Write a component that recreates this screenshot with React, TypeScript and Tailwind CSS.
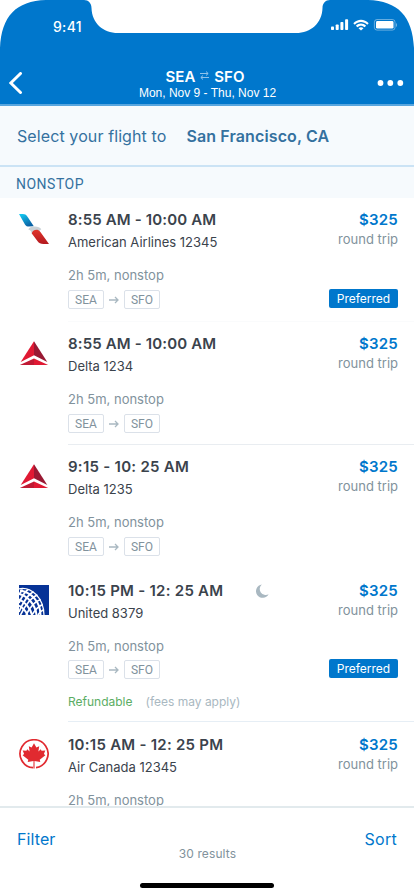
import type { ReactNode } from 'react'

type Airline = 'american' | 'delta' | 'united' | 'canada'

interface Flight {
  id: number
  airline: Airline
  time: string
  name: string
  route?: [string, string]
  preferred?: boolean
  overnight?: boolean
  refundable?: boolean
  height: string
  divider: string
  timeSpacing: string
}

const FLIGHTS: Flight[] = [
  { id: 1, airline: 'american', time: '8:55 AM - 10:00 AM', name: 'American Airlines 12345', route: ['SEA', 'SFO'], preferred: true, height: 'h-[124px]', divider: 'bg-[#fafbfc]', timeSpacing: 'tracking-[0.14px]' },
  { id: 2, airline: 'delta', time: '8:55 AM - 10:00 AM', name: 'Delta 1234', route: ['SEA', 'SFO'], height: 'h-[123px]', divider: 'bg-[#e9edf1]', timeSpacing: 'tracking-[0.14px]' },
  { id: 3, airline: 'delta', time: '9:15 - 10: 25 AM', name: 'Delta 1235', route: ['SEA', 'SFO'], height: 'h-[124px]', divider: 'bg-white', timeSpacing: 'tracking-[0.27px]' },
  { id: 4, airline: 'united', time: '10:15 PM - 12: 25 AM', name: 'United 8379', route: ['SEA', 'SFO'], preferred: true, overnight: true, refundable: true, height: 'h-[154px] pb-px', divider: 'bg-[#e6eef5]', timeSpacing: 'tracking-[0.26px]' },
  { id: 5, airline: 'canada', time: '10:15 AM - 12: 25 PM', name: 'Air Canada 12345', height: 'h-[124px]', divider: 'bg-[#e9edf1]', timeSpacing: 'tracking-[0.26px]' },
]

function AmericanLogo() {
  return (
    <svg width="30" height="30" viewBox="0 0 30 30">
      <defs>
        <linearGradient id="aaBlue" x1="0" y1="0" x2="0.6" y2="1">
          <stop offset="0" stopColor="#13d0f7" />
          <stop offset="1" stopColor="#0a61a4" />
        </linearGradient>
        <linearGradient id="aaRed" x1="0" y1="0" x2="0" y2="1">
          <stop offset="0" stopColor="#e0352b" />
          <stop offset="1" stopColor="#b3191f" />
        </linearGradient>
      </defs>
      <path d="M0 0H3.600C6.400 0 7.600 1.200 9 3.400L14.800 12.200 9 12.600C7 12.400 6.400 11.300 5.400 9.600Z" fill="url(#aaBlue)" />
      <path d="M9.300 15.600C10 13.400 13 12.200 16 12.500 19 12.700 21 13.400 22.300 15.200L20 17 14.500 20.500 12.500 19.500C12.500 17.500 11.500 16.200 9.300 15.600Z" fill="#c9d1d6" />
      <path d="M12.800 19.400C13 17 16 15.200 19 15.900 20.200 16.400 20.800 17 21.400 18L30 30H24.500C21.500 29.900 20 29 18.600 27.200Z" fill="url(#aaRed)" />
    </svg>
  )
}

function DeltaLogo() {
  return (
    <svg width="30" height="30" viewBox="0 0 30 30">
      <path d="M15 3.200V17.200L1.700 24Z" fill="#e01933" />
      <path d="M15 3.200V17.200L28.300 24Z" fill="#991933" />
      <path d="M15 20.400V27H0.800Z" fill="#c01933" />
      <path d="M15 20.400V27H29.200Z" fill="#e01933" />
    </svg>
  )
}

function UnitedLogo() {
  return (
    <svg width="30" height="30" viewBox="0 0 30 30">
      <rect width="30" height="30" fill="#063296" />
      <g fill="none" stroke="#fff">
        <path d="M0 3.800C12 1.500 24.500 12 25 30" strokeWidth="1.200" />
        <path d="M1 5.500C12 7 21.500 17 21.500 30M0 9C9 11 16.500 20 17.500 30M0 14.500C6 17 11.500 23 13 30M0 20.500C4 23 7 26 8.500 30" strokeWidth="2" />
        <path d="M0 27C4 17 10 9 14.500 6.800M0 18C2.500 12 6 7 9 4.500M1.500 30C6 20 13 12 18.500 10M7 30C11 22 17 16 21.700 14.500M13 30C16 25 20 21 23.800 19.500M19 30C20.500 27.500 22.500 25.500 25 24.500M0 9.500L3.500 4.500" strokeWidth="1.700" />
      </g>
    </svg>
  )
}

function CanadaLogo() {
  return (
    <svg width="30" height="30" viewBox="0 0 30 30">
      <path d="M14 28.700A14 14 0 1 1 17 28.600" fill="none" stroke="#e12a30" strokeWidth="1.700" />
      <path d="M15 4.200L17.400 8.500 20.200 7.200 19.400 12.600 21.700 10.200 22.600 11.800 26.300 11.400 24.900 15 26.400 16.200 20.700 20.700 21.300 22.900 15.500 22 15.600 29.500H14.400L14.500 22 8.700 22.900 9.300 20.700 3.600 16.200 5.100 15 3.700 11.400 7.400 11.800 8.300 10.200 10.600 12.600 9.800 7.200 12.600 8.500Z" fill="#e12a30" />
    </svg>
  )
}

const LOGOS: Record<Airline, ReactNode> = {
  american: <AmericanLogo />,
  delta: <DeltaLogo />,
  united: <UnitedLogo />,
  canada: <CanadaLogo />,
}

function AirportTag({ children }: { children: ReactNode }) {
  return (
    <span className="flex h-[19px] w-9 items-center justify-center rounded-[2px] border border-[#dbe1e9] font-['Roboto',sans-serif] text-[12px] leading-none text-[#81929c]">
      {children}
    </span>
  )
}

function FlightRow({ flight }: { flight: Flight }) {
  return (
    <div className={`flex shrink-0 pl-[19px] ${flight.height}`}>
      <div className="w-[49px] shrink-0 pt-4">{LOGOS[flight.airline]}</div>
      <div className="flex min-w-0 flex-1 flex-col">
        <div className="flex flex-1 justify-between pr-4">
          <div className="flex flex-col items-start whitespace-nowrap pt-3">
            <div className="flex h-5 items-center">
              <p className={`text-[15px] leading-5 font-semibold text-[#3b434c] ${flight.timeSpacing}`}>{flight.time}</p>
              {flight.overnight && (
                <svg className="ml-[33px]" width="13" height="14" viewBox="0 0 13 14">
                  <path d="M5.800 0.500A6.700 6.700 0 1 0 12.600 10.300 6 6 0 0 1 5.800 0.500Z" fill="#a9b8c1" />
                </svg>
              )}
            </div>
            <p className="mt-1 text-[13px] leading-4 text-[#3b434c]">{flight.name}</p>
            <p className="mt-[17px] text-[13px] leading-4 text-[#81929c]">2h 5m, nonstop</p>
            {flight.route && (
              <div className={`flex items-center ${flight.refundable ? 'mt-[6px]' : 'mt-[7px]'}`}>
                <AirportTag>{flight.route[0]}</AirportTag>
                <svg className="mx-[5px]" width="10" height="8" viewBox="0 0 10 8" fill="none" stroke="#a9b8c1" strokeWidth="1.300">
                  <path d="M0 4H9M6 1L9 4 6 7" />
                </svg>
                <AirportTag>{flight.route[1]}</AirportTag>
              </div>
            )}
            {flight.refundable && (
              <p className="mt-[15px] text-[12px] leading-4 text-[#5bad64]">
                Refundable
                <span className="ml-[13px] text-[#a9b8c1]">(fees may apply)</span>
              </p>
            )}
          </div>
          <div className="flex flex-col items-end pt-3">
            <p className="text-[15px] leading-5 font-semibold tracking-[0.2px] text-[#0077cc]">$325</p>
            <p className="mt-px text-[13px] leading-4 text-[#81929c]">round trip</p>
            {flight.preferred && (
              <span className={`flex h-[19px] w-[69px] items-center justify-center rounded-[2px] bg-[#0077cc] text-[12px] leading-none text-white ${flight.refundable ? 'mt-[41px]' : 'mt-[42px]'}`}>
                Preferred
              </span>
            )}
          </div>
        </div>
        <div className={`h-px shrink-0 ${flight.divider}`} />
      </div>
    </div>
  )
}

function StatusIcons() {
  return (
    <svg width="67" height="12" viewBox="0 0 67 12" fill="#fff">
      <rect x="0" y="7.500" width="3" height="3.500" rx="0.800" />
      <rect x="4.700" y="5.500" width="3" height="5.500" rx="0.800" />
      <rect x="9.400" y="3" width="3" height="8" rx="0.800" />
      <rect x="14.100" y="0.300" width="3" height="10.700" rx="0.800" />
      <path d="M22.300 4.200C26.500-0.500 33.500-0.500 37.700 4.200L36.200 5.700C32.800 2.100 27.200 2.100 23.800 5.700Z" />
      <path d="M24.900 6.800C27.700 3.700 32.300 3.700 35.100 6.800L33.600 8.300C31.600 6.200 28.400 6.200 26.400 8.300Z" />
      <path d="M27.500 9.200C28.900 7.800 31.100 7.800 32.500 9.200L30 11.600Z" />
      <rect x="43.400" y="0.500" width="20.600" height="10.600" rx="2.600" fill="none" stroke="#fff" strokeOpacity="0.400" />
      <rect x="45" y="2" width="17.500" height="7.600" rx="1.400" />
      <path d="M65 4V8C66.400 7.500 66.400 4.500 65 4Z" opacity="0.450" />
    </svg>
  )
}

export default function App() {
  return (
    <div className="flex h-[896px] w-[414px] flex-col overflow-hidden bg-white font-['Inter',sans-serif]">
      <header className="relative h-[106px] shrink-0 text-white">
        {/* Screen outline with the notch */}
        <svg className="absolute inset-0" width="414" height="106" viewBox="0 0 414 106">
          <path d="M0 106V48C1.500 16 16 1 46 0H84C88.500 0 91.500 3.500 91.500 8 92 23 103 33 118 33H296C311 33 322 23 322.500 8 322.500 3.500 325.500 0 330 0H368C398 1 412.500 16 414 48V106Z" fill="#0077cc" />
          <rect y="104" width="414" height="2" fill="#58a6df" />
        </svg>
        <div className="relative flex h-[54px] items-center justify-between pr-4 pl-[53px]">
          <span className="-mt-[2px] text-[14px] font-medium tracking-[0.3px]">9:41</span>
          <div className="-mt-[5px]">
            <StatusIcons />
          </div>
        </div>
        <div className="relative flex items-start justify-between pr-[10px] pl-[9px]">
          <svg className="mt-[18px]" width="28" height="22" viewBox="0 0 28 22" fill="none" stroke="#fff" strokeWidth="3">
            <path d="M11.500 1.500L1.800 11 11.500 20.500" strokeLinecap="round" />
          </svg>
          <div className="flex flex-col items-center pt-[13px]">
            <div className="mr-1 flex items-center text-[15px] leading-5 font-semibold">
              SEA
              <svg className="mr-[5px] ml-[5px] -mt-[3px]" width="9" height="9" viewBox="0 0 9 9" fill="none" stroke="#8fc3eb">
                <path d="M0 2.500H8M6 0.500L8.200 2.500 6 4.500M9 6.500H1M3 4.500L0.800 6.500 3 8.500" />
              </svg>
              SFO
            </div>
            <p className="-mt-[1px] ml-px font-['Liberation_Sans',sans-serif] text-[12px] leading-[14px]">Mon, Nov 9 - Thu, Nov 12</p>
          </div>
          <svg className="mt-[26px]" width="27" height="6" viewBox="0 0 27 6" fill="#fff">
            <circle cx="3.500" cy="3" r="2.900" />
            <circle cx="13.300" cy="3" r="2.900" />
            <circle cx="23.300" cy="3" r="2.900" />
          </svg>
        </div>
      </header>

      <section className="flex h-[61px] shrink-0 items-center border-b-2 border-[#cbe3f5] bg-[#f6fafd] pl-[17px] text-[16px] text-[#34719f]">
        <span className="tracking-[0.1px]">Select your flight to</span>
        <span className="ml-5 font-semibold tracking-[0.12px]">San Francisco, CA</span>
      </section>
      <h2 className="flex h-[31px] shrink-0 items-center bg-[#f6fafd] pl-4 pt-[3px] font-['Roboto',sans-serif] text-[14px] tracking-[0.5px] text-[#34719f]">NONSTOP</h2>

      <main className="flex min-h-0 flex-1 flex-col overflow-hidden">
        {FLIGHTS.map(flight => (
          <FlightRow key={flight.id} flight={flight} />
        ))}
      </main>

      <footer className="flex h-[90px] shrink-0 flex-col border-t-2 border-[#e2eaed] bg-white">
        <div className="flex items-start justify-between px-[17px] pt-[19px] text-[16px] leading-6 text-[#0077cc]">
          <button className="tracking-[0.1px]">Filter</button>
          <p className="mt-[17px] mr-[5px] text-[12px] leading-5 tracking-[0.1px] text-[#81929c]">30 results</p>
          <button className="tracking-[0.3px]">Sort</button>
        </div>
        <div className="mx-auto mt-auto mb-[8px] h-[5px] w-[134px] rounded-full bg-black" />
      </footer>
    </div>
  )
}
